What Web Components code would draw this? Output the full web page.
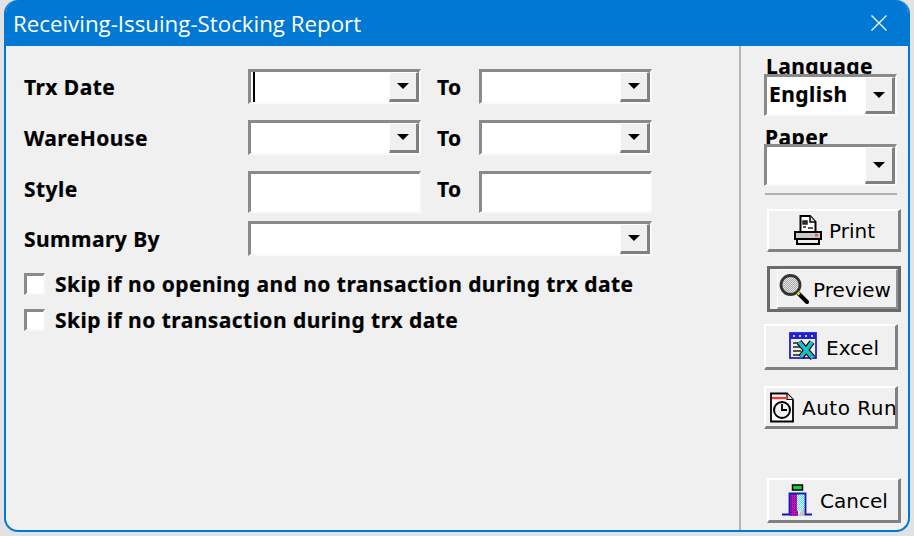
<!DOCTYPE html>
<html>
<head>
<meta charset="utf-8">
<title>Receiving-Issuing-Stocking Report</title>
<style>
  html,body{margin:0;height:100%;background:#e2e2e2;overflow:hidden}
</style>
</head>
<body>
<report-window heading="Receiving-Issuing-Stocking Report">
  <report-form slot="form">
    <span class="lbl">Trx Date</span>
    <win-combo caret></win-combo>
    <span class="to">To</span>
    <win-combo></win-combo>

    <span class="lbl">WareHouse</span>
    <win-combo></win-combo>
    <span class="to">To</span>
    <win-combo></win-combo>

    <span class="lbl">Style</span>
    <win-field></win-field>
    <span class="to">To</span>
    <win-field></win-field>

    <span class="lbl">Summary By</span>
    <win-combo class="wide"></win-combo>

    <win-check class="all">Skip if no opening and no transaction during trx date</win-check>
    <win-check class="all">Skip if no transaction during trx date</win-check>
  </report-form>

  <report-side slot="side">
    <span class="cap" style="height:19px;margin-left:25px">Language</span>
    <win-combo class="side-combo">English</win-combo>
    <span class="cap" style="height:18px;margin:10px 0 0 24px">Paper</span>
    <win-combo class="side-combo"></win-combo>
    <div class="sep"></div>

    <win-button class="r" style="height:43px;margin-top:14px;padding-left:25px;--gap:6px">
      <svg slot="icon" width="29" height="30" viewBox="0 0 29 30">
        <path d="M6.5 1H16l5.500 6v11h-15z" fill="#fff" stroke="#000" stroke-width="2"/>
        <path d="M16 1v6h5.500" fill="#ddd" stroke="#000" stroke-width="1.500"/>
        <path d="M9 6h4v3H9zM9 12h3M14 13h5" fill="#333" stroke="#222" stroke-width="1.500"/>
        <rect x="1" y="17" width="26" height="7" fill="#c9c9c9" stroke="#000" stroke-width="2"/>
        <rect x="21" y="19" width="3" height="2.500" fill="#f35050"/>
        <rect x="3" y="24" width="22" height="5" fill="#eee" stroke="#000" stroke-width="2"/>
      </svg>
      Print
    </win-button>

    <win-button class="r" default style="height:46px;margin-top:14px;padding-left:7px;--gap:4px">
      <svg slot="icon" width="31" height="31" viewBox="0 0 31 31">
        <defs><pattern id="dg" width="2" height="2" patternUnits="userSpaceOnUse"><rect width="2" height="2" fill="#e4e4e4"/><rect width="1" height="1" fill="#a8a8a8"/><rect x="1" y="1" width="1" height="1" fill="#a8a8a8"/></pattern></defs>
        <circle cx="12.500" cy="12" r="9.500" fill="url(#dg)" stroke="#333" stroke-width="2.800"/>
        <path d="M21 21l8 8" stroke="#000" stroke-width="4" stroke-linecap="round"/>
        <path d="M19.500 19.500l2 2" stroke="#e8d820" stroke-width="2.500"/>
      </svg>
      Preview
    </win-button>

    <win-button class="l" style="height:46px;margin-top:12px;padding-left:23px;--gap:7px">
      <svg slot="icon" width="30" height="30" viewBox="0 0 30 30">
        <rect x="1" y="1" width="26" height="25" fill="#eee" stroke="#2222cc" stroke-width="1.800"/>
        <rect x="1" y="1" width="26" height="6" fill="#2222cc"/>
        <path d="M4 4h2M10 4h2M16 4h2M22 4h2" stroke="#fff" stroke-width="1.500"/>
        <path d="M4 11h8M4 15h8M4 19h8M4 23h8" stroke="#555" stroke-width="1.800"/>
        <path d="M10 10l14 16M23 10L12 25" stroke="#000" stroke-width="6"/>
        <path d="M10 10l14 16M23 10L12 25" stroke="#18c0c8" stroke-width="3.800"/>
      </svg>
      Excel
    </win-button>

    <win-button class="l" style="height:43px;margin-top:16px;padding-left:3px;--gap:7px;letter-spacing:.5px">
      <svg slot="icon" width="26" height="31" viewBox="0 0 26 31">
        <path d="M2 1.500h16l6 6v22H2z" fill="#fff" stroke="#000" stroke-width="1.800"/>
        <path d="M18 1.500v6h6" fill="#ddd" stroke="#000" stroke-width="1.200"/>
        <path d="M3 6h15" stroke="#f33" stroke-width="2.400"/>
        <circle cx="13" cy="18" r="8" fill="#f4f4f4" stroke="#000" stroke-width="2"/>
        <path d="M13 12v6h5" fill="none" stroke="#000" stroke-width="1.800"/>
      </svg>
      Auto Run
    </win-button>

    <win-button class="r" style="height:45px;margin-top:auto;padding-left:12px;--gap:7px">
      <svg slot="icon" width="32" height="32" viewBox="0 0 32 32">
        <defs>
          <pattern id="mg" width="2" height="2" patternUnits="userSpaceOnUse"><rect width="2" height="2" fill="#c010c0"/><rect width="1" height="1" fill="#601070"/></pattern>
          <pattern id="cy" width="2" height="2" patternUnits="userSpaceOnUse"><rect width="2" height="2" fill="#fff"/><rect width="1" height="1" fill="#30e8f0"/><rect x="1" y="1" width="1" height="1" fill="#30e8f0"/></pattern>
        </defs>
        <rect x="11.500" y="1" width="10" height="5" fill="#10d040" stroke="#000" stroke-width="1.500"/>
        <rect x="9" y="10" width="8" height="22" fill="url(#mg)"/>
        <rect x="16" y="10" width="8" height="17" fill="url(#cy)"/>
        <path d="M17 32l4-7h3v7z" fill="#c4c4c4"/>
        <path d="M1 30.500h7.500V9.500h16v21H31" fill="none" stroke="#1818b8" stroke-width="1.800"/>
      </svg>
      Cancel
    </win-button>
  </report-side>
</report-window>

<script>
const FACE = '"DejaVu Sans","Liberation Sans",sans-serif';
const BOLD = '"Noto Sans","DejaVu Sans",sans-serif';

class ReportWindow extends HTMLElement {
  connectedCallback() {
    this.attachShadow({ mode: 'open' });
    this.shadowRoot.innerHTML = `
      <style>
        :host{display:flex;flex-direction:column;box-sizing:border-box;width:906px;height:532px;margin-left:4px;
          background:#f0f0f0;border:2px solid #0078d4;border-top:0;border-radius:14px;overflow:hidden}
        .bar{flex:none;height:46px;background:#0078d4;color:#fff;display:flex;align-items:center;justify-content:space-between;
          padding:0 20px 0 7px;font:22.300px "Open Sans",sans-serif}
        .body{flex:1;display:flex;min-height:0}
        ::slotted([slot=form]){flex:none;width:733px}
        ::slotted([slot=side]){flex:1}
        svg{display:block}
      </style>
      <div class="bar">
        <span>${this.getAttribute('heading')}</span>
        <svg width="18" height="18" viewBox="0 0 18 18"><path d="M1.500 1.500l15 15M16.500 1.500l-15 15" stroke="#fff" stroke-width="1.300"/></svg>
      </div>
      <div class="body"><slot name="form"></slot><slot name="side"></slot></div>
    `;
  }
}

class ReportForm extends HTMLElement {
  connectedCallback() {
    this.attachShadow({ mode: 'open' });
    this.shadowRoot.innerHTML = `
      <style>
        :host{display:grid;box-sizing:border-box;padding:23px 0 0 18px;
          grid-template-columns:224px 173px 58px 173px;grid-template-rows:51px 51px 50px 52px 36px 36px;align-content:start;
          align-items:start;font:bold 21px ${BOLD};color:#000;letter-spacing:.45px;-webkit-text-stroke:.2px #000}
        ::slotted(.lbl){line-height:36px}
        ::slotted(.to){line-height:36px;padding-left:16px}
        ::slotted(.wide){grid-column:2 / 5}
        ::slotted(.all){grid-column:1 / 5}
      </style>
      <slot></slot>
    `;
  }
}

class ReportSide extends HTMLElement {
  connectedCallback() {
    this.attachShadow({ mode: 'open' });
    this.shadowRoot.innerHTML = `
      <style>
        :host{display:flex;flex-direction:column;box-sizing:border-box;padding:9px 0 7px 0;
          border-left:2px solid #b4b4b4;font:20px ${FACE};color:#000}
        ::slotted(.cap){display:block;overflow:hidden;font:bold 21px/22px ${BOLD};letter-spacing:.45px;-webkit-text-stroke:.2px #000}
        ::slotted(.side-combo){margin-left:23px;width:133px;height:42px;font:bold 21px ${BOLD};letter-spacing:.45px;-webkit-text-stroke:.2px #000}
        ::slotted(.sep){height:2px;margin:7px 11px 0 24px;background:#b0b0b0}
        ::slotted(.r){margin-left:26px;width:134px}
        ::slotted(.l){margin-left:23px;width:134px}
      </style>
      <slot></slot>
    `;
  }
}

class WinCombo extends HTMLElement {
  connectedCallback() {
    this.attachShadow({ mode: 'open' });
    this.shadowRoot.innerHTML = `
      <style>
        :host{display:flex;box-sizing:border-box;height:35px;background:#fff;
          border:3px solid;border-color:#8a8a8a #fafafa #fafafa #8a8a8a;border-right-width:2px;border-bottom-width:2px}
        .txt{flex:1;min-width:0;padding-left:2px;line-height:34px;overflow:hidden;white-space:nowrap;position:relative}
        .caret{position:absolute;left:2px;top:0;bottom:0;width:1.500px;background:#000}
        .btn{flex:none;width:30px;box-sizing:border-box;background:#f0f0f0;display:flex;align-items:center;justify-content:center;
          border:solid;border-width:1px 3px 3px 1px;border-color:#fff #808080 #808080 #fff}
        .btn i{display:block;width:0;height:0;border:6.500px solid transparent;border-top:6.500px solid #000;border-bottom:0}
      </style>
      <div class="txt">${this.hasAttribute('caret') ? '<span class="caret"></span>' : ''}<slot></slot></div>
      <div class="btn"><i></i></div>
    `;
  }
}

class WinField extends HTMLElement {
  connectedCallback() {
    this.attachShadow({ mode: 'open' });
    this.shadowRoot.innerHTML = `
      <style>
        :host{display:block;box-sizing:border-box;height:42px;background:#fff;
          border:3px solid;border-color:#8a8a8a #fafafa #fafafa #8a8a8a;border-right-width:2px;border-bottom-width:2px}
      </style>
      <slot></slot>
    `;
  }
}

class WinCheck extends HTMLElement {
  connectedCallback() {
    this.attachShadow({ mode: 'open' });
    this.shadowRoot.innerHTML = `
      <style>
        :host{display:flex;align-items:center;gap:10px;height:22px;white-space:nowrap}
        .box{flex:none;box-sizing:border-box;width:21px;height:22px;background:#fff;
          border:3px solid;border-color:#8a8a8a #f8f8f8 #f8f8f8 #8a8a8a;border-right-width:2px;border-bottom-width:2px}
      </style>
      <span class="box"></span><span><slot></slot></span>
    `;
  }
}

class WinButton extends HTMLElement {
  connectedCallback() {
    this.attachShadow({ mode: 'open' });
    this.shadowRoot.innerHTML = `
      <style>
        :host{display:block;box-sizing:border-box;background:#f0f0f0;white-space:nowrap;overflow:hidden;
          border:solid;border-width:2px 3px 3px 2px;border-color:#fff #808080 #808080 #fff}
        :host([default]){border:3px solid #6a6a6a}
        .in{height:100%;display:flex;align-items:center;gap:var(--gap,5px);overflow:hidden}
        :host([default]) .in{box-sizing:border-box;border:solid;border-width:1px 2px 2px 1px;border-color:#fff #909090 #909090 #fff}
        .t{padding-top:2px}
        ::slotted(svg){display:block;flex:none}
      </style>
      <div class="in"><slot name="icon"></slot><span class="t"><slot></slot></span></div>
    `;
  }
}

customElements.define('report-window', ReportWindow);
customElements.define('report-form', ReportForm);
customElements.define('report-side', ReportSide);
customElements.define('win-combo', WinCombo);
customElements.define('win-field', WinField);
customElements.define('win-check', WinCheck);
customElements.define('win-button', WinButton);
</script>
</body>
</html>
